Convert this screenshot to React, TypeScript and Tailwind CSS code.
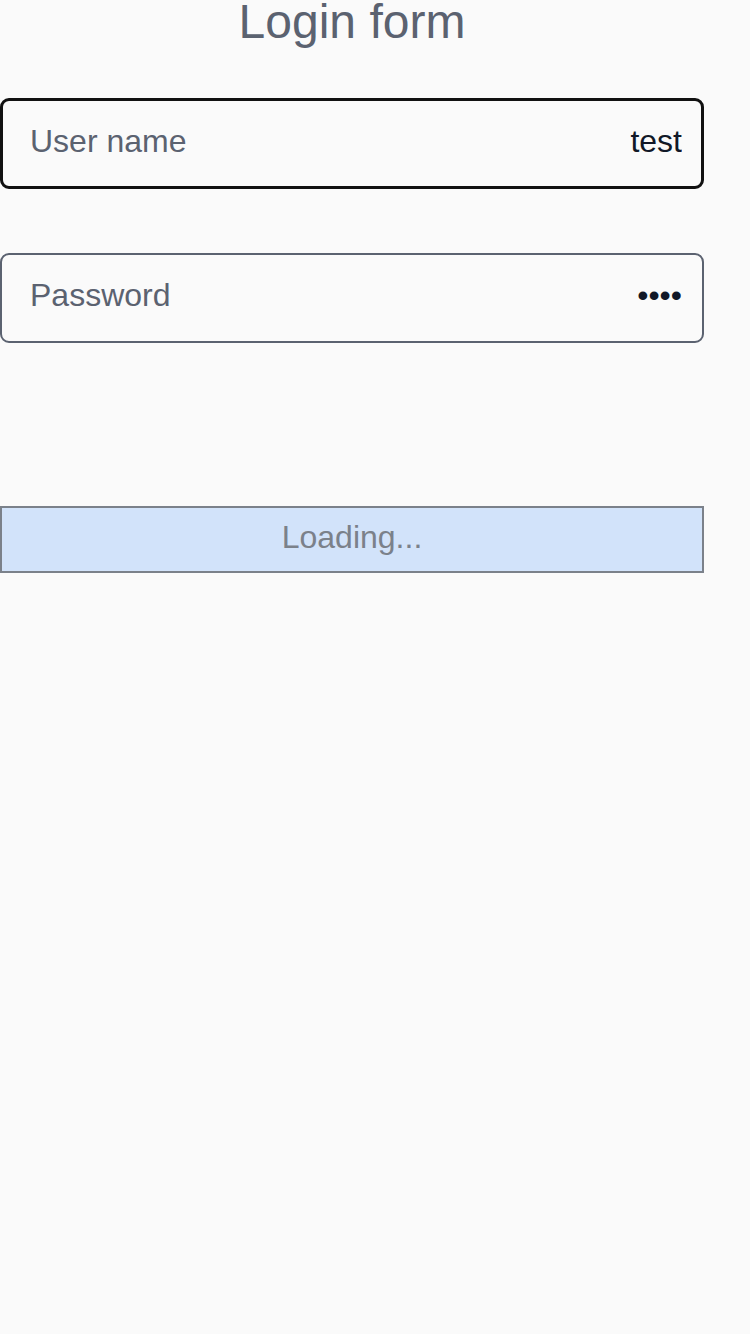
import { useState } from "react";

export default function App() {
  const [user, setUser] = useState("test");
  const [pass, setPass] = useState("test");

  return (
    <div className="min-h-[1334px] bg-[#fafafa] font-['Liberation_Sans',Arial,sans-serif]">
      <div className="w-[704px] flex flex-col">
        <h1 className="text-[48px] leading-[44px] text-center text-[#5b6270]">Login form</h1>

        <label className="mt-[54px] h-[91px] flex items-center border-[3px] border-[#111111] rounded-[9px] pl-[27px] pr-[19px] pb-[6px]">
          <span className="text-[32px] text-[#5b6270] whitespace-nowrap">User name</span>
          <input
            className="flex-1 min-w-0 text-right text-[32px] text-[#111827] bg-transparent outline-none"
            value={user}
            onChange={(e) => setUser(e.target.value)}
          />
        </label>

        <label className="mt-[64px] h-[90px] flex items-center border-2 border-[#5b6270] rounded-[9px] pl-[28px] pr-[20px] pb-[6px]">
          <span className="text-[32px] text-[#5b6270] whitespace-nowrap">Password</span>
          <input
            type="password"
            className="flex-1 min-w-0 text-right text-[32px] text-[#111827] bg-transparent outline-none"
            value={pass}
            onChange={(e) => setPass(e.target.value)}
          />
        </label>

        <button
          disabled
          className="mt-[163px] h-[67px] w-full bg-[#d2e3fa] border-2 border-[#7b818a] text-[32px] text-[#7b818a] pb-[6px]"
        >
          Loading...
        </button>
      </div>
    </div>
  );
}
